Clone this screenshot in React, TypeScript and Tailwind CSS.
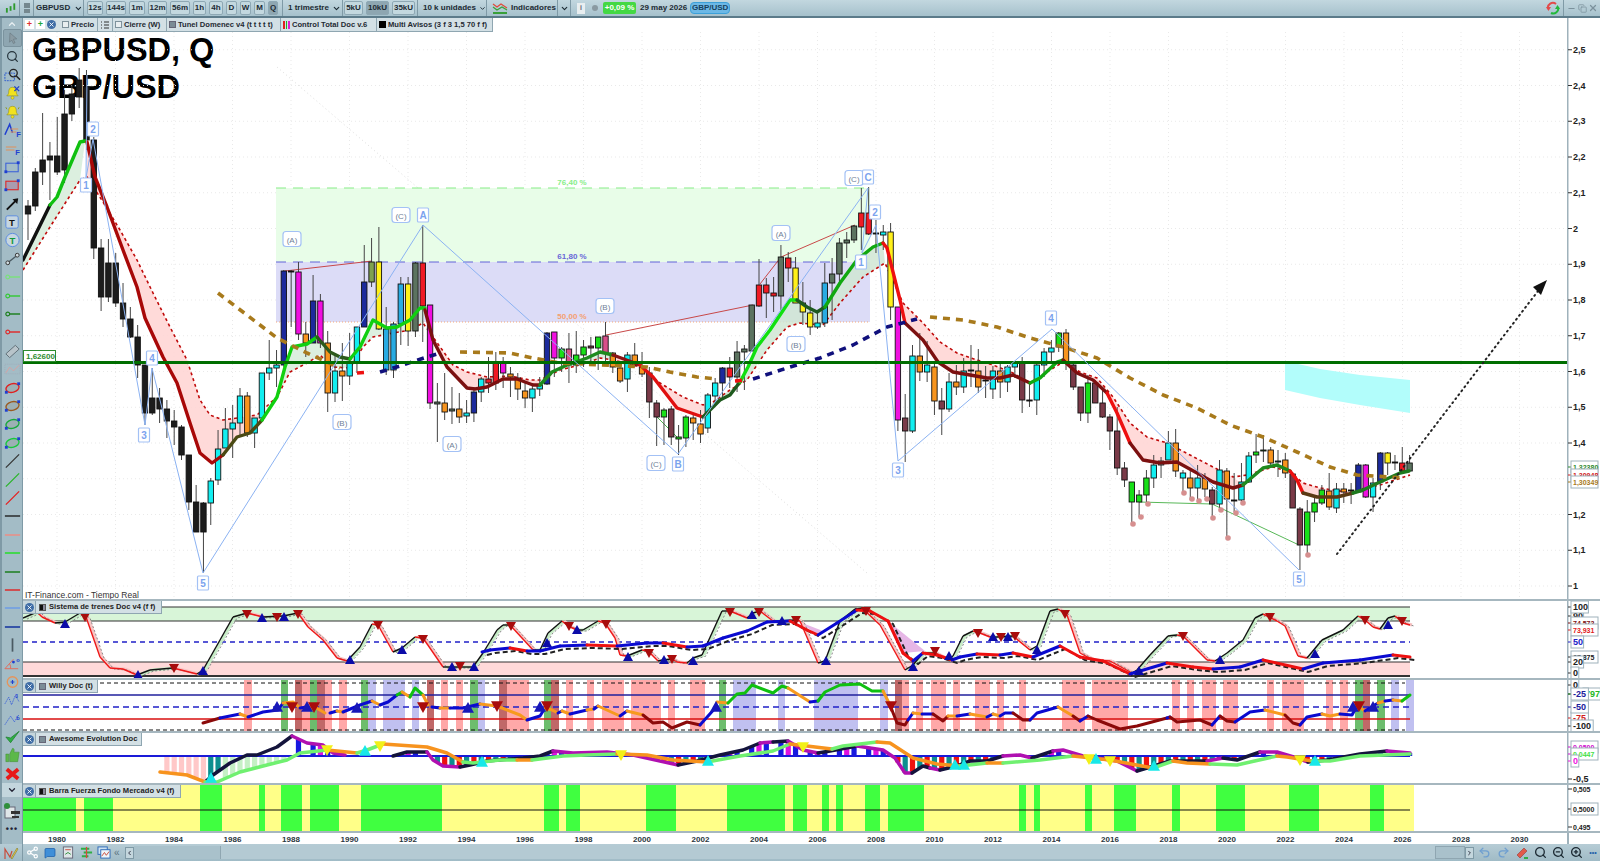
import type { ReactNode } from "react";
import { ChevronDown, ChevronUp, ChevronLeft, ChevronRight, Undo2, Redo2, ZoomIn, ZoomOut, Search, Share2, MessageSquare, X, Minus, Copy } from "lucide-react";

type Pt = [number, number];
type Seg = { c: string; p: Pt[] };

const COLORS: Record<string, string> = {
  k: "#1c1c1c", c: "#12eef0", o: "#f7941e", n: "#1c2a9c", m: "#f010e0", r: "#f01a24", y: "#fff01a",
  g: "#18e018", b: "#29abe2", s: "#7fa050", v: "#5c7360", w: "#7a3a48", p: "#d94f8a",
};

// top wick, body top, body bottom, bottom wick, colour -- one row per quarter, in screen pixels
const CANDLES: [number, number, number, number, string][] = [
  [200, 206, 214, 240, "k"], [168, 172, 206, 211, "k"], [113, 160, 172, 185, "k"], [142, 156, 160, 200, "k"], [117, 156, 172, 175, "k"],
  [90, 114, 170, 183, "k"], [85, 94, 114, 121, "k"], [68, 80, 97, 108, "k"], [70, 87, 140, 150, "k"], [137, 140, 248, 259, "k"],
  [239, 248, 297, 311, "k"], [239, 263, 297, 302, "k"], [253, 263, 303, 307, "k"], [283, 303, 319, 327, "k"], [307, 319, 337, 338, "k"],
  [325, 337, 365, 378, "k"], [365, 365, 413, 425, "k"], [368, 398, 413, 415, "k"], [388, 398, 409, 423, "k"], [400, 409, 421, 438, "k"],
  [410, 421, 427, 445, "k"], [425, 427, 455, 460, "k"], [455, 455, 502, 510, "k"], [485, 502, 532, 532, "k"], [502, 503, 532, 573, "k"],
  [478, 481, 503, 525, "c"], [430, 449, 480, 485, "c"], [408, 429, 448, 448, "c"], [405, 423, 429, 458, "c"], [388, 396, 423, 437, "c"],
  [392, 396, 433, 437, "o"], [418, 418, 433, 448, "c"], [373, 373, 418, 418, "c"], [340, 368, 373, 380, "c"], [350, 365, 368, 387, "c"],
  [270, 271, 365, 367, "n"], [270, 271, 272, 327, "k"], [262, 272, 334, 340, "m"], [322, 334, 343, 357, "o"], [275, 301, 343, 343, "n"],
  [294, 301, 343, 348, "m"], [331, 343, 393, 412, "o"], [353, 371, 393, 402, "c"], [343, 371, 376, 401, "o"], [333, 362, 376, 385, "c"],
  [327, 327, 362, 373, "c"], [245, 282, 327, 327, "n"], [238, 262, 282, 287, "s"], [227, 262, 329, 330, "y"], [307, 329, 370, 375, "b"],
  [322, 324, 370, 378, "b"], [277, 284, 324, 345, "b"], [277, 284, 331, 346, "y"], [262, 263, 331, 337, "v"], [225, 263, 306, 342, "r"],
  [305, 305, 403, 409, "m"], [383, 402, 404, 442, "v"], [373, 403, 412, 420, "o"], [387, 409, 411, 424, "v"], [393, 409, 417, 423, "o"],
  [400, 413, 416, 423, "c"], [387, 392, 413, 422, "n"], [377, 379, 392, 402, "c"], [357, 379, 383, 393, "r"], [352, 363, 383, 390, "r"],
  [357, 363, 373, 388, "m"], [367, 374, 377, 397, "o"], [373, 378, 389, 400, "o"], [383, 391, 398, 408, "o"], [383, 389, 398, 412, "c"],
  [377, 385, 389, 396, "c"], [332, 333, 384, 385, "n"], [332, 332, 358, 377, "m"], [347, 349, 358, 372, "g"], [333, 349, 365, 383, "p"],
  [331, 355, 365, 373, "g"], [340, 347, 355, 367, "g"], [337, 346, 348, 365, "w"], [337, 337, 348, 370, "g"], [322, 336, 353, 362, "p"],
  [352, 353, 367, 373, "o"], [365, 368, 381, 383, "o"], [352, 355, 379, 392, "c"], [343, 355, 365, 367, "o"], [352, 367, 374, 377, "o"],
  [367, 373, 402, 418, "w"], [400, 403, 417, 446, "w"], [408, 410, 417, 445, "g"], [406, 409, 437, 445, "w"], [425, 437, 439, 455, "g"],
  [415, 417, 438, 447, "g"], [413, 418, 423, 440, "o"], [410, 424, 434, 443, "o"], [393, 395, 428, 433, "c"], [378, 383, 396, 403, "c"],
  [367, 368, 383, 398, "n"], [357, 368, 377, 388, "r"], [341, 352, 377, 392, "v"], [345, 349, 352, 390, "v"], [305, 305, 351, 351, "v"],
  [259, 285, 306, 307, "r"], [278, 285, 293, 318, "r"], [277, 293, 296, 312, "r"], [245, 257, 296, 310, "v"], [252, 258, 268, 282, "r"],
  [257, 268, 303, 303, "y"], [282, 303, 312, 325, "y"], [300, 313, 327, 335, "y"], [312, 323, 327, 329, "c"], [263, 283, 323, 327, "b"],
  [258, 274, 283, 320, "v"], [238, 243, 274, 283, "v"], [232, 240, 243, 258, "v"], [225, 226, 240, 243, "v"], [188, 213, 227, 250, "r"],
  [187, 213, 234, 235, "r"], [220, 233, 234, 253, "k"], [225, 232, 235, 250, "c"], [223, 232, 307, 320, "y"], [307, 307, 420, 431, "m"],
  [394, 418, 431, 462, "w"], [345, 356, 431, 433, "c"], [333, 356, 372, 381, "o"], [341, 365, 372, 382, "c"], [363, 367, 401, 415, "o"],
  [388, 401, 409, 435, "w"], [373, 382, 409, 412, "c"], [365, 382, 387, 395, "o"], [358, 371, 387, 393, "c"], [345, 370, 371, 387, "k"],
  [349, 371, 387, 393, "o"], [366, 380, 381, 398, "k"], [366, 371, 389, 399, "c"], [363, 371, 382, 398, "o"], [365, 367, 382, 392, "c"],
  [362, 363, 367, 378, "c"], [357, 363, 400, 413, "w"], [383, 400, 401, 407, "k"], [363, 365, 400, 415, "c"], [348, 352, 365, 377, "c"],
  [340, 348, 352, 362, "c"], [332, 333, 347, 352, "g"], [329, 333, 362, 370, "o"], [364, 365, 387, 390, "w"], [387, 387, 413, 421, "w"],
  [375, 383, 413, 423, "g"], [380, 383, 403, 403, "w"], [387, 403, 417, 418, "w"], [414, 417, 431, 450, "w"], [407, 431, 468, 475, "w"],
  [462, 468, 480, 487, "w"], [482, 482, 502, 524, "g"], [490, 495, 502, 517, "g"], [470, 478, 495, 503, "g"], [455, 465, 478, 488, "c"],
  [457, 461, 465, 478, "c"], [431, 443, 460, 460, "c"], [429, 443, 471, 477, "o"], [470, 473, 478, 493, "c"], [470, 478, 488, 500, "o"],
  [465, 478, 488, 500, "c"], [473, 478, 489, 497, "o"], [487, 490, 504, 517, "w"], [460, 470, 504, 509, "c"], [468, 471, 499, 537, "o"],
  [473, 500, 501, 512, "k"], [463, 482, 500, 502, "c"], [452, 456, 482, 483, "c"], [434, 452, 455, 463, "g"], [435, 450, 451, 462, "g"],
  [447, 450, 463, 465, "o"], [450, 461, 462, 477, "c"], [453, 460, 473, 478, "o"], [472, 474, 508, 508, "w"], [507, 509, 545, 570, "w"],
  [500, 512, 545, 553, "g"], [497, 503, 512, 522, "g"], [485, 490, 503, 505, "g"], [473, 491, 507, 510, "o"], [483, 489, 508, 513, "c"],
  [483, 489, 492, 503, "o"], [483, 490, 491, 504, "k"], [463, 465, 492, 493, "n"], [464, 465, 497, 498, "m"], [478, 483, 497, 512, "c"],
  [452, 453, 482, 490, "n"], [452, 453, 463, 475, "y"], [455, 462, 463, 470, "k"], [447, 463, 471, 472, "r"], [455, 463, 471, 472, "v"],
];
const candleX = (i: number) => 28 + i * 7.31;

const FAST: Seg[] = [
  { c: "#111", p: [[23, 260], [50, 205]] },
  { c: "#10c010", p: [[50, 205], [57, 197], [65, 177], [80, 142], [85, 141]] },
  { c: "#a80808", p: [[87, 142], [95, 177], [107, 207], [123, 250], [137, 287], [145, 318], [163, 357], [177, 383], [190, 423], [200, 453], [212, 463], [223, 455]] },
  { c: "#4a4a14", p: [[223, 455], [237, 437], [250, 433], [262, 420]] },
  { c: "#10d010", p: [[262, 420], [277, 397], [285, 367], [292, 347], [307, 344], [317, 337]] },
  { c: "#2c5a1c", p: [[317, 337], [330, 352], [340, 357], [350, 359]] },
  { c: "#10d010", p: [[350, 359], [360, 347], [373, 320], [387, 328], [397, 327], [410, 320], [420, 308], [425, 308]] },
  { c: "#7c1010", p: [[425, 310], [433, 340], [447, 367], [467, 388], [475, 389], [487, 387], [503, 379], [517, 379], [533, 385], [540, 385]] },
  { c: "#1e8a1e", p: [[540, 385], [552, 372], [567, 365], [587, 358], [600, 352], [613, 355]] },
  { c: "#8a1414", p: [[613, 355], [640, 365]] },
  { c: "#e01010", p: [[640, 365], [653, 377], [677, 408], [697, 415], [703, 417]] },
  { c: "#1e5a1e", p: [[703, 417], [710, 410], [720, 400], [730, 395], [740, 382]] },
  { c: "#10e010", p: [[740, 382], [748, 367], [757, 347], [770, 330], [790, 300], [797, 300]] },
  { c: "#1e5a1e", p: [[797, 300], [807, 307], [817, 312], [825, 307]] },
  { c: "#10a810", p: [[825, 307], [840, 283], [857, 260], [873, 247], [883, 243]] },
  { c: "#ee1010", p: [[883, 243], [887, 248], [900, 300], [905, 323]] },
  { c: "#7c1010", p: [[905, 323], [923, 340], [938, 362], [953, 372], [970, 375], [987, 378], [1000, 378], [1013, 375], [1030, 383]] },
  { c: "#10a810", p: [[1030, 383], [1040, 378], [1057, 362], [1063, 360]] },
  { c: "#7c1010", p: [[1063, 360], [1077, 373], [1093, 380], [1107, 393]] },
  { c: "#ee1010", p: [[1107, 393], [1117, 413], [1130, 443]] },
  { c: "#7c1010", p: [[1130, 443], [1143, 460], [1160, 463], [1177, 462], [1197, 473], [1213, 482], [1233, 488], [1243, 485]] },
  { c: "#1e8a1e", p: [[1243, 485], [1263, 468], [1277, 465], [1290, 471]] },
  { c: "#ee1010", p: [[1290, 471], [1297, 480], [1303, 493]] },
  { c: "#5a3a14", p: [[1303, 493], [1317, 497], [1337, 497], [1353, 493]] },
  { c: "#1e7a1e", p: [[1353, 493], [1363, 490], [1380, 482], [1400, 473], [1409, 471]] },
];
const SLOW: Pt[] = [
  [23, 270], [50, 227], [80, 180], [87, 177], [103, 202], [120, 230], [137, 260], [153, 293], [170, 327], [187, 360], [200, 400], [210, 415], [223, 420], [237, 418], [257, 415], [277, 397], [290, 372], [307, 363], [320, 355], [332, 367], [350, 368], [363, 347], [373, 337], [393, 333], [410, 330], [423, 323],
  [433, 337], [453, 365], [467, 372], [487, 377], [510, 376], [530, 380], [540, 380], [560, 370], [580, 365], [600, 358], [613, 360], [640, 367], [660, 383], [683, 397], [703, 405], [713, 402], [730, 390], [747, 380], [767, 350], [787, 327], [800, 323], [823, 325], [840, 303], [863, 277], [885, 263],
  [903, 303], [923, 323], [940, 342], [957, 353], [977, 360], [993, 365], [1013, 373], [1030, 383], [1047, 372], [1063, 362], [1080, 372], [1097, 378], [1113, 397], [1130, 423], [1147, 437], [1167, 443], [1190, 455], [1213, 467], [1233, 477], [1247, 475], [1273, 467], [1290, 472], [1303, 483], [1320, 488], [1347, 492], [1380, 485], [1410, 475],
];
const BANDS: [number, number, string][] = [
  [23, 85, "#d6ecd9"], [87, 262, "#ffd4d2"], [263, 425, "#d6ecd9"], [425, 540, "#ffd4d2"], [540, 613, "#d6ecd9"], [613, 710, "#ffd4d2"],
  [710, 885, "#d0e6d4"], [887, 1030, "#ffd4d2"], [1063, 1243, "#ffd4d2"], [1290, 1360, "#ffd4d2"],
];
const TREND: Seg[] = [
  { c: "#a87a1c", p: [[218, 293], [277, 338], [307, 353], [340, 368]] },
  { c: "#ee1010", p: [[357, 373], [370, 372]] },
  { c: "#10107c", p: [[380, 372], [403, 365], [427, 357], [440, 353]] },
  { c: "#a87a1c", p: [[460, 352], [510, 353], [533, 358], [560, 363], [647, 367], [670, 372], [697, 377], [717, 379]] },
  { c: "#ee1010", p: [[735, 381], [747, 380]] },
  { c: "#10107c", p: [[753, 379], [787, 368], [820, 358], [853, 345], [887, 327], [917, 319]] },
  { c: "#a87a1c", p: [[930, 317], [963, 320], [997, 327], [1030, 338], [1063, 347], [1097, 358], [1130, 378], [1163, 395], [1197, 408], [1230, 425], [1263, 437], [1297, 452], [1330, 467], [1357, 475], [1405, 478]] },
];
const WAVE: Pt[] = [[87, 75], [86, 178], [93, 139], [145, 425], [152, 368], [203, 573], [423, 225], [678, 454], [868, 188], [862, 253], [876, 225], [898, 461], [1052, 329], [1299, 570]];
const DOTS: Pt[] = [[1133, 524], [1141, 517], [1148, 504], [1184, 493], [1192, 499], [1199, 501], [1207, 499], [1213, 518], [1221, 510], [1228, 538], [1236, 513], [1243, 503], [1308, 555]];
const WAVE_TAGS: [string, number, number][] = [
  ["2", 93, 129], ["1", 86, 185], ["3", 144, 435], ["4", 152, 358], ["5", 203, 583], ["A", 423, 215], ["(A)", 292, 239], ["(C)", 401, 215], ["(B)", 342, 422],
  ["(A)", 452, 444], ["(B)", 605, 306], ["(C)", 656, 463], ["B", 678, 464], ["(A)", 781, 233], ["(B)", 796, 344], ["(C)", 854, 178], ["C", 868, 177],
  ["1", 861, 262], ["2", 875, 212], ["3", 898, 470], ["4", 1051, 318], ["5", 1299, 579],
];

const OSC_K: Pt[] = [
  [23, 618], [37, 612], [42, 617], [55, 623], [65, 622], [80, 613], [86, 617], [100, 657], [110, 668], [123, 669], [137, 675], [150, 670], [173, 668], [197, 674], [203, 670], [220, 640], [233, 617], [247, 613], [263, 617], [283, 616], [298, 613], [308, 627], [323, 640], [337, 658], [347, 661], [360, 647], [372, 624], [378, 625], [393, 652], [402, 648], [415, 637], [423, 638], [443, 667], [473, 667], [483, 653], [497, 630], [503, 625], [510, 625], [533, 650], [540, 650], [548, 633], [562, 621], [568, 626], [577, 630], [583, 630], [598, 621], [605, 623], [615, 638], [620, 655], [627, 656], [642, 650], [648, 651], [658, 661], [663, 660], [672, 659], [677, 662], [687, 663], [693, 658], [702, 655], [722, 611], [730, 611], [747, 618], [753, 613], [760, 611], [773, 621], [780, 621], [795, 620], [800, 621], [818, 663], [825, 661], [840, 621], [855, 609], [862, 608], [880, 625], [905, 670], [913, 665], [923, 653], [935, 653], [947, 660], [953, 656], [963, 636], [973, 631], [980, 633], [990, 637], [997, 637], [1013, 636], [1030, 650], [1037, 646], [1050, 611], [1058, 609], [1067, 615], [1080, 653], [1093, 660], [1110, 661], [1132, 673], [1137, 670], [1150, 655], [1168, 636], [1177, 635], [1183, 636], [1207, 660], [1215, 661], [1227, 653], [1243, 640], [1255, 618], [1263, 614], [1277, 621], [1285, 626], [1298, 656], [1307, 658], [1322, 640], [1343, 630], [1358, 616], [1365, 620], [1373, 627], [1380, 629], [1388, 618], [1395, 616], [1403, 623], [1410, 625],
];
const OSC_MA: Pt[] = [
  [482, 652], [490, 650], [510, 648], [527, 651], [540, 651], [560, 646], [587, 645], [617, 646], [647, 643], [663, 643], [687, 647], [703, 646], [723, 638], [747, 631], [767, 622], [790, 621], [807, 630], [818, 635], [837, 623], [857, 610], [870, 611], [888, 621], [903, 653], [913, 661], [923, 653], [937, 655], [952, 660], [960, 657], [977, 654], [1000, 655], [1013, 653], [1033, 657], [1060, 646], [1080, 657], [1103, 661], [1130, 674], [1167, 663], [1193, 667], [1213, 669], [1240, 667], [1263, 660], [1303, 669], [1323, 663], [1360, 660], [1393, 655], [1410, 657],
];
const OSC_UP: Pt[] = [[65, 624], [138, 675], [203, 671], [262, 618], [284, 617], [350, 660], [402, 650], [452, 667], [474, 667], [547, 643], [577, 630], [628, 657], [664, 660], [693, 661], [752, 615], [782, 621], [826, 661], [913, 667], [949, 656], [993, 637], [1008, 637], [1037, 650], [1139, 671], [1220, 660], [1315, 654], [1388, 625]];
const OSC_DOWN: Pt[] = [[85, 617], [174, 668], [247, 614], [277, 617], [298, 614], [378, 625], [423, 639], [460, 666], [511, 626], [569, 626], [606, 624], [649, 653], [672, 659], [730, 612], [759, 612], [796, 620], [866, 611], [935, 651], [978, 633], [1001, 637], [1015, 636], [1065, 614], [1183, 636], [1270, 617], [1365, 620], [1402, 621]];

const W = { red: "#8b0a0a", blue: "#0a0ad0", or: "#f79a1e", gr: "#10c010" };
const WILLY: Seg[] = [
  { c: W.red, p: [[203, 723], [220, 718]] }, { c: W.blue, p: [[220, 718], [240, 714]] }, { c: W.or, p: [[240, 714], [248, 717]] },
  { c: W.blue, p: [[248, 717], [263, 712], [278, 710], [283, 703]] }, { c: W.or, p: [[283, 703], [293, 702], [300, 708]] }, { c: W.blue, p: [[300, 708], [307, 707]] },
  { c: W.or, p: [[307, 707], [315, 707], [325, 713]] }, { c: W.blue, p: [[330, 713], [337, 711]] }, { c: W.or, p: [[337, 711], [343, 712]] },
  { c: W.blue, p: [[343, 712], [360, 705], [372, 701]] }, { c: W.or, p: [[372, 701], [380, 705]] }, { c: W.blue, p: [[380, 705], [388, 702], [397, 695]] },
  { c: W.gr, p: [[397, 695], [402, 692]] }, { c: W.or, p: [[402, 692], [410, 697]] }, { c: W.gr, p: [[410, 697], [415, 688], [423, 695]] },
  { c: W.or, p: [[423, 695], [428, 705]] }, { c: W.blue, p: [[432, 707], [440, 708]] }, { c: W.or, p: [[440, 708], [450, 708]] }, { c: W.blue, p: [[450, 708], [463, 708], [480, 704]] },
  { c: W.or, p: [[480, 704], [497, 706], [520, 715], [527, 720]] }, { c: W.blue, p: [[527, 720], [540, 716], [545, 708]] }, { c: W.or, p: [[545, 708], [552, 710], [558, 713]] },
  { c: W.blue, p: [[558, 713], [562, 711]] }, { c: W.or, p: [[562, 711], [570, 714]] }, { c: W.blue, p: [[570, 714], [587, 710]] }, { c: W.or, p: [[587, 710], [594, 709]] },
  { c: W.blue, p: [[594, 709], [598, 706]] }, { c: W.or, p: [[598, 706], [620, 716]] }, { c: W.blue, p: [[620, 716], [627, 711]] }, { c: W.or, p: [[627, 711], [643, 715]] },
  { c: W.red, p: [[643, 715], [653, 723], [663, 722], [672, 728], [687, 722], [700, 725]] }, { c: W.blue, p: [[700, 725], [717, 706]] }, { c: W.or, p: [[717, 702], [728, 703]] },
  { c: W.gr, p: [[728, 703], [737, 694], [745, 693], [752, 685], [773, 693], [782, 686], [788, 688]] }, { c: W.or, p: [[788, 688], [810, 702]] }, { c: W.blue, p: [[810, 702], [818, 701]] },
  { c: W.gr, p: [[818, 701], [825, 692], [840, 685], [860, 684], [872, 691], [883, 691]] }, { c: W.or, p: [[883, 691], [890, 705]] },
  { c: W.red, p: [[890, 705], [897, 723], [905, 725], [908, 720]] }, { c: W.blue, p: [[908, 720], [913, 713]] }, { c: W.or, p: [[913, 713], [922, 714]] }, { c: W.blue, p: [[922, 714], [933, 714]] },
  { c: W.red, p: [[933, 714], [943, 721], [948, 716]] }, { c: W.or, p: [[948, 716], [957, 716]] }, { c: W.blue, p: [[957, 716], [970, 714]] }, { c: W.or, p: [[970, 714], [987, 717]] },
  { c: W.blue, p: [[987, 717], [993, 714]] }, { c: W.or, p: [[993, 714], [1000, 716]] }, { c: W.blue, p: [[1000, 716], [1005, 713], [1013, 713]] }, { c: W.red, p: [[1013, 713], [1023, 720], [1030, 720]] },
  { c: W.blue, p: [[1030, 720], [1037, 713], [1058, 707]] }, { c: W.or, p: [[1058, 707], [1073, 716]] }, { c: W.red, p: [[1073, 716], [1080, 721]] }, { c: W.blue, p: [[1080, 721], [1088, 716]] },
  { c: W.red, p: [[1088, 716], [1097, 720], [1120, 729], [1137, 726], [1167, 718]] }, { c: W.blue, p: [[1167, 718], [1170, 717]] }, { c: W.red, p: [[1170, 717], [1177, 722], [1200, 720], [1212, 725]] },
  { c: W.blue, p: [[1212, 725], [1220, 716]] }, { c: W.red, p: [[1220, 716], [1227, 721], [1235, 722]] }, { c: W.blue, p: [[1235, 722], [1250, 712], [1265, 710]] }, { c: W.or, p: [[1265, 710], [1285, 715]] },
  { c: W.red, p: [[1285, 715], [1293, 723], [1300, 725]] }, { c: W.blue, p: [[1300, 725], [1307, 717], [1322, 714]] }, { c: W.or, p: [[1322, 714], [1330, 716], [1340, 714]] }, { c: W.blue, p: [[1340, 714], [1352, 715], [1357, 706]] },
  { c: W.or, p: [[1357, 706], [1365, 711]] }, { c: W.blue, p: [[1365, 711], [1378, 703]] }, { c: W.or, p: [[1378, 703], [1385, 701]] }, { c: W.blue, p: [[1385, 701], [1393, 700]] }, { c: W.or, p: [[1393, 700], [1402, 701]] }, { c: W.gr, p: [[1402, 701], [1410, 695]] },
];
const WILLY_UP: Pt[] = [[277, 707], [307, 707], [357, 708], [468, 708], [540, 707], [716, 707], [1353, 707], [1373, 707]];
const WILLY_DOWN: Pt[] = [[292, 707], [314, 707], [423, 707], [497, 706], [547, 706], [891, 706], [1359, 706]];
const PK = "#ffa8a8", GR = "#6dbd6d", MR = "#c06868", LV = "#c0c0f0";
const WILLY_BARS: [number, number, string][] = [
  [244, 252, PK], [281, 288, GR], [295, 302, MR], [302, 310, PK], [310, 317, GR], [317, 325, MR], [325, 332, PK], [339, 347, PK], [361, 368, GR], [368, 376, LV], [383, 405, LV], [412, 419, LV], [427, 434, MR], [441, 448, PK], [456, 463, PK], [470, 478, GR], [478, 485, LV],
  [499, 507, MR], [507, 529, PK], [544, 551, GR], [551, 559, MR], [566, 573, PK], [587, 594, PK], [602, 624, PK], [631, 661, PK], [668, 675, PK], [690, 705, PK], [719, 726, GR], [733, 756, LV], [778, 785, LV], [814, 858, LV], [880, 888, LV], [895, 902, MR], [902, 909, PK], [916, 923, PK], [931, 946, PK], [953, 960, PK],
  [975, 990, PK], [997, 1004, PK], [1019, 1026, PK], [1062, 1085, PK], [1092, 1128, PK], [1172, 1180, PK], [1187, 1194, PK], [1202, 1216, PK], [1223, 1238, PK], [1267, 1274, PK], [1282, 1304, PK], [1326, 1333, PK], [1340, 1348, PK], [1355, 1363, GR], [1363, 1370, MR], [1377, 1385, GR], [1391, 1399, LV], [1406, 1414, LV],
];

const AK = "#14143c", AM = "#b010b0";
const AWE_MAIN: Seg[] = [
  { c: AK, p: [[205, 782], [213, 775], [230, 763], [247, 755], [257, 755], [277, 747], [292, 736]] }, { c: AM, p: [[292, 736], [307, 743], [323, 745], [333, 753], [345, 755]] },
  { c: AK, p: [[393, 756], [407, 752], [427, 752]] }, { c: AM, p: [[427, 752], [433, 760], [443, 766], [460, 767]] }, { c: AK, p: [[460, 767], [470, 765], [487, 761], [523, 758], [540, 756], [553, 751]] },
  { c: AM, p: [[553, 751], [573, 753], [607, 752], [633, 755], [660, 761], [678, 765]] }, { c: AK, p: [[678, 765], [697, 761], [720, 755], [743, 750], [760, 743]] }, { c: AM, p: [[760, 743], [773, 742]] },
  { c: AK, p: [[773, 742], [788, 741]] }, { c: AM, p: [[788, 741], [803, 750], [818, 753]] }, { c: AK, p: [[818, 753], [830, 751], [857, 746]] }, { c: AM, p: [[857, 746], [883, 750], [895, 758], [905, 773], [912, 773]] },
  { c: AK, p: [[912, 773], [923, 766], [930, 768]] }, { c: AM, p: [[930, 768], [940, 770]] }, { c: AK, p: [[940, 770], [957, 766], [970, 761], [987, 761], [1003, 756]] }, { c: AM, p: [[1003, 756], [1020, 755], [1032, 758]] },
  { c: AK, p: [[1032, 758], [1053, 751]] }, { c: AM, p: [[1053, 751], [1063, 750], [1083, 756], [1117, 761], [1137, 771]] }, { c: AK, p: [[1137, 771], [1147, 768], [1170, 761], [1207, 761]] }, { c: AM, p: [[1207, 761], [1223, 758]] },
  { c: AK, p: [[1223, 758], [1237, 760], [1260, 752]] }, { c: AM, p: [[1260, 752], [1277, 752], [1297, 758], [1308, 762]] }, { c: AK, p: [[1308, 762], [1327, 760], [1360, 754], [1387, 751]] }, { c: AM, p: [[1387, 751], [1410, 753]] },
];
const AO = "#f7931e", AG = "#70f070";
const AWE_SIGNAL: Seg[] = [
  { c: AO, p: [[160, 772], [187, 775], [205, 782]] }, { c: AG, p: [[205, 782], [217, 782], [240, 772], [267, 765], [287, 760], [300, 753], [327, 750]] }, { c: AO, p: [[327, 750], [357, 753]] }, { c: AG, p: [[357, 753], [367, 750], [383, 744]] },
  { c: AO, p: [[383, 744], [427, 747], [447, 753], [463, 762]] }, { c: AG, p: [[463, 762], [473, 763], [500, 760], [517, 760]] }, { c: AO, p: [[517, 760], [532, 760]] }, { c: AG, p: [[532, 760], [563, 756], [587, 755], [617, 754]] },
  { c: AO, p: [[617, 754], [647, 755], [673, 760], [707, 762]] }, { c: AG, p: [[707, 762], [740, 756], [773, 751], [790, 744]] }, { c: AO, p: [[790, 744], [832, 749]] }, { c: AG, p: [[832, 749], [843, 746], [877, 742]] },
  { c: AO, p: [[877, 742], [890, 743], [913, 758], [937, 764], [960, 766]] }, { c: AG, p: [[960, 766], [987, 763]] }, { c: AO, p: [[987, 763], [1003, 763]] }, { c: AG, p: [[1003, 763], [1040, 760], [1073, 756]] },
  { c: AO, p: [[1073, 756], [1110, 760], [1153, 768]] }, { c: AG, p: [[1153, 768], [1173, 761]] }, { c: AO, p: [[1173, 761], [1187, 763], [1210, 764]] }, { c: AG, p: [[1210, 764], [1237, 765], [1277, 756]] },
  { c: AO, p: [[1277, 756], [1287, 757], [1312, 761]] }, { c: AG, p: [[1312, 761], [1330, 761], [1360, 756], [1410, 754]] },
];
const AWE_CYAN: Pt[] = [[211, 778], [365, 751], [482, 762], [708, 761], [955, 765], [964, 765], [1096, 759], [1154, 766], [1315, 761]];
const AWE_YELLOW: Pt[] = [[327, 750], [380, 746], [621, 755], [803, 747], [1089, 759], [1110, 761], [1300, 760]];

const FORCE_GREEN: [number, number][] = [
  [23, 76], [84, 113], [200, 222], [259, 265], [281, 302], [310, 339], [361, 442], [544, 559], [566, 580], [646, 676], [727, 785], [793, 807], [822, 829], [836, 843], [865, 880], [888, 924],
  [1019, 1026], [1034, 1040], [1085, 1092], [1114, 1136], [1172, 1180], [1216, 1245], [1289, 1319], [1370, 1384],
];

const YEARS = Array.from({ length: 26 }, (_, i) => 1980 + i * 2);
const yearX = (yr: number) => 57 + (yr - 1980) * 29.25;
const priceY = (p: number) => 586 - (p - 1) * 357.5;
const pts = (p: Pt[]) => p.map((q) => q.join(",")).join(" ");

function interp(line: Pt[], x: number) {
  for (let i = 1; i < line.length; i++) {
    const [x0, y0] = line[i - 1];
    const [x1, y1] = line[i];
    if (x >= x0 && x <= x1) return y0 + ((y1 - y0) * (x - x0)) / (x1 - x0 || 1);
  }
  return 756;
}

function Lines({ segs, w, dash, cap = "round" }: { segs: Seg[]; w: number; dash?: string; cap?: "round" | "butt" }) {
  return (
    <g fill="none" strokeWidth={w} strokeLinecap={cap} strokeLinejoin="round" strokeDasharray={dash}>
      {segs.map((s, i) => (
        <polyline key={i} points={pts(s.p)} stroke={s.c} />
      ))}
    </g>
  );
}

function Tri({ at, up, c, r = 5 }: { at: Pt; up: boolean; c: string; r?: number }) {
  const [x, y] = at;
  const p = up ? `${x - r},${y + r * 0.8} ${x + r},${y + r * 0.8} ${x},${y - r}` : `${x - r},${y - r * 0.8} ${x + r},${y - r * 0.8} ${x},${y + r}`;
  return <polygon points={p} fill={c} />;
}

function WaveTag({ t, x, y }: { t: string; x: number; y: number }) {
  const round = t.startsWith("(");
  const w = round ? 18 : 11;
  const h = round ? 15 : 14;
  return (
    <g>
      <rect x={x - w / 2} y={y - h / 2} width={w} height={h} rx={round ? 3 : 1} fill="#fff" stroke="#a3c1f5" strokeWidth={1.2} />
      <text x={x} y={y + 3.5} textAnchor="middle" fontSize={round ? 8 : 10} fontWeight={round ? 400 : 700} fill={round ? "#6f7f98" : "#7ba3ee"}>
        {t}
      </text>
    </g>
  );
}

function MainChart() {
  const fastAll = FAST.flatMap((s) => s.p);
  const gridPrices = Array.from({ length: 16 }, (_, i) => 1 + i * 0.1);
  return (
    <svg viewBox="23 18 1544 581" className="relative z-10 h-[581px] w-[1544px]">
      <g stroke="#e9e9e9" strokeDasharray="1 3">
        {gridPrices.map((p) => (
          <line key={p} x1={23} x2={1567} y1={priceY(p)} y2={priceY(p)} />
        ))}
        {YEARS.map((y) => (
          <line key={y} x1={yearX(y)} x2={yearX(y)} y1={32} y2={599} />
        ))}
      </g>
      <line x1={277} y1={67} x2={867} y2={573} stroke="#dddddd" strokeDasharray="1 3" />

      <rect x={276} y={188} width={594} height={74} fill="#e8fde8" />
      <rect x={276} y={262} width={594} height={60} fill="#dcdcf7" />
      <line x1={276} x2={870} y1={188} y2={188} stroke="#86ec86" strokeDasharray="10 7" />
      <line x1={276} x2={870} y1={262} y2={262} stroke="#6262d8" strokeDasharray="10 7" />
      <line x1={276} x2={870} y1={322} y2={322} stroke="#f5a878" strokeDasharray="1 2" />
      <text x={572} y={185} textAnchor="middle" fontSize={8} fontWeight={700} fill="#88ee88">76,40 %</text>
      <text x={572} y={259} textAnchor="middle" fontSize={8} fontWeight={700} fill="#6868d8">61,80 %</text>
      <text x={572} y={319} textAnchor="middle" fontSize={8} fontWeight={700} fill="#f5a070">50,00 %</text>

      <polygon points="1285,361 1320,369 1360,375 1410,380 1410,413 1360,405 1320,398 1285,390" fill="#b2fdfb" />

      {BANDS.map(([a, b, c]) => (
        <polygon
          key={a}
          fill={c}
          opacity={0.85}
          points={pts([...fastAll.filter((q) => q[0] >= a && q[0] <= b), ...SLOW.filter((q) => q[0] >= a && q[0] <= b).reverse()])}
        />
      ))}
      <polyline points={pts(SLOW)} fill="none" stroke="#c00a0a" strokeWidth={1.6} strokeDasharray="3 3" />

      <polyline points="285,271 372,261" fill="none" stroke="#c84848" />
      <polyline points="606,335 753,305" fill="none" stroke="#c84848" />
      <polyline points="760,284 781,257 855,225" fill="none" stroke="#c84848" />
      <polyline points="657,417 678,438" fill="none" stroke="#4caf4c" />
      <polyline points="1139,502 1212,504 1299,545" fill="none" stroke="#58b858" />

      {CANDLES.map(([top, bt, bb, bot, c], i) => {
        const x = candleX(i);
        return (
          <g key={i}>
            <line x1={x} x2={x} y1={top} y2={bot} stroke="#444" />
            <rect x={x - 2.7} y={bt} width={5.4} height={Math.max(bb - bt, 1)} fill={COLORS[c]} stroke="#111" strokeWidth={0.9} />
          </g>
        );
      })}

      <Lines segs={FAST} w={3.4} />
      <Lines segs={TREND} w={3.6} dash="7 6" cap="butt" />
      <rect x={23} y={361} width={1544} height={3} fill="#006e00" />
      <polyline points={pts(WAVE)} fill="none" stroke="#8bb2f2" />
      {DOTS.map(([x, y]) => (
        <circle key={x} cx={x} cy={y} r={2.8} fill="#d68f8f" />
      ))}
      {WAVE_TAGS.map(([t, x, y]) => (
        <WaveTag key={`${t}${x}`} t={t} x={x} y={y} />
      ))}

      <line x1={1337} y1={554} x2={1538} y2={291} stroke="#222" strokeWidth={2} strokeDasharray="1 4" strokeLinecap="round" />
      <polygon points="1547,280 1533,287 1541,295" fill="#111" />

      <rect x={23.5} y={350.5} width={32} height={11} fill="#fff" stroke="#2e8b2e" />
      <text x={26} y={359} fontSize={8} fontWeight={700} fill="#2e8b2e">1,62600</text>
      <text x={25} y={598} fontSize={8.5} fill="#333">IT-Finance.com - Tiempo Real</text>
    </svg>
  );
}

function OscPanel() {
  const colour = (a: Pt, b: Pt) => (b[1] <= a[1] ? "#111" : "#ee1818");
  const band = (a: Pt, b: Pt) => (b[1] <= a[1] ? "#c6ecc6" : "#f8c4c4");
  const maSegs = OSC_MA.slice(1).map((b, i) => ({ c: b[1] <= OSC_MA[i][1] ? "#0a0ad0" : "#ee1010", p: [OSC_MA[i], b] }));
  return (
    <svg viewBox="23 601 1544 77" className="h-[77px] w-[1544px]">
      <rect x={23} y={607} width={1387} height={14} fill="#d8f5d8" />
      <rect x={23} y={662} width={1387} height={14} fill="#ffd9d9" />
      <g stroke="#333" strokeWidth={1.2}>
        <line x1={23} x2={1410} y1={607} y2={607} />
        <line x1={23} x2={1410} y1={621} y2={621} />
        <line x1={23} x2={1410} y1={662} y2={662} />
        <line x1={23} x2={1410} y1={676} y2={676} strokeWidth={2} />
      </g>
      <line x1={23} x2={1410} y1={642} y2={642} stroke="#2020c8" strokeWidth={1.6} strokeDasharray="5 4" />
      <polygon points="797,621 818,635 823,631" fill="#e6b6e6" />
      <polygon points="888,621 925,651 903,653" fill="#e6b6e6" />
      {OSC_K.slice(1).map((b, i) => (
        <line key={i} x1={OSC_K[i][0] + 2} y1={OSC_K[i][1]} x2={b[0] + 2} y2={b[1]} stroke={band(OSC_K[i], b)} strokeWidth={3} />
      ))}
      <polyline points={pts(OSC_K.map(([x, y]) => [x + 4, y + 1] as Pt))} fill="none" stroke="#888" strokeDasharray="2 2" />
      {OSC_K.slice(1).map((b, i) => (
        <line key={i} x1={OSC_K[i][0]} y1={OSC_K[i][1]} x2={b[0]} y2={b[1]} stroke={colour(OSC_K[i], b)} strokeWidth={1.4} />
      ))}
      <polyline points={pts(OSC_MA.map(([x, y]) => [x + 5, y + 3] as Pt))} fill="none" stroke="#222" strokeWidth={2} strokeDasharray="5 3" />
      <Lines segs={maSegs} w={3} />
      {OSC_UP.map((p) => <Tri key={p[0]} at={p} up c="#0c0ca8" />)}
      {OSC_DOWN.map((p) => <Tri key={p[0]} at={p} up={false} c="#a80c0c" />)}
    </svg>
  );
}

function WillyPanel() {
  return (
    <svg viewBox="23 680 1544 51" className="h-[51px] w-[1544px]">
      {WILLY_BARS.map(([a, b, c]) => (
        <rect key={a} x={a} y={680} width={b - a} height={51} fill={c} />
      ))}
      <line x1={23} x2={1405} y1={683} y2={683} stroke="#111" strokeDasharray="4 3" />
      <line x1={23} x2={1410} y1={695} y2={695} stroke="#20209c" strokeWidth={1.5} />
      <line x1={23} x2={1410} y1={707} y2={707} stroke="#2020c8" strokeWidth={1.6} strokeDasharray="6 4" />
      <line x1={23} x2={1410} y1={719} y2={719} stroke="#d80f0f" strokeWidth={1.5} />
      <line x1={23} x2={1405} y1={730} y2={730} stroke="#111" strokeDasharray="4 3" />
      <Lines segs={WILLY} w={3} />
      {WILLY_UP.map((p) => <Tri key={p[0]} at={p} up c="#1818b8" r={6} />)}
      {WILLY_DOWN.map((p) => <Tri key={p[0]} at={p} up={false} c="#a80c0c" r={6} />)}
    </svg>
  );
}

function AwesomePanel() {
  const main = AWE_MAIN.flatMap((s) => s.p);
  const signal = AWE_SIGNAL.flatMap((s) => s.p);
  const bars = Array.from({ length: 190 }, (_, i) => candleX(i)).filter((x) => x > 164 && x < 1410);
  return (
    <svg viewBox="23 733 1544 50" className="h-[50px] w-[1544px]">
      {bars.map((x, i) => {
        let y = interp(main, x);
        let c = y < 756 ? (i % 4 === 1 ? "#e010e0" : i % 4 === 3 ? "#fff" : "#1818e0") : i % 2 ? "#0c8f8f" : "#ee1010";
        if (x < 205) {
          y = interp(signal, x);
          c = "#ffc8c8";
        } else if (x >= 205 && x < 222) c = "#0c8f8f";
        else if (x < 293) {
          y = interp(signal, x);
          c = "#c6f0c6";
        }
        return <rect key={x} x={x - 2.6} y={Math.min(y, 756)} width={5.2} height={Math.abs(y - 756)} fill={c} />;
      })}
      <line x1={23} x2={1410} y1={756} y2={756} stroke="#1a1ad8" strokeWidth={1.8} />
      <Lines segs={AWE_MAIN} w={3.5} />
      <Lines segs={AWE_SIGNAL} w={3.5} />
      {AWE_CYAN.map((p) => <Tri key={p[0]} at={p} up c="#18e8e8" r={6} />)}
      {AWE_YELLOW.map((p) => <Tri key={p[0]} at={p} up={false} c="#f2f018" r={6} />)}
    </svg>
  );
}

function ForcePanel() {
  return (
    <svg viewBox="23 785 1544 46" className="h-[46px] w-[1544px]">
      <rect x={23} y={785} width={1391} height={46} fill="#ffff88" />
      {FORCE_GREEN.map(([a, b]) => (
        <rect key={a} x={a} y={785} width={b - a} height={46} fill="#40ff40" />
      ))}
      <line x1={23} x2={1410} y1={810} y2={810} stroke="#111" strokeWidth={1.2} />
    </svg>
  );
}

type AxisTag = { y: number; t: string; c?: string; box?: boolean; x?: number; tick?: string };

function Axis({ top, h, tags }: { top: number; h: number; tags: AxisTag[] }) {
  return (
    <svg viewBox={`1567 ${top} 33 ${h}`} className="shrink-0" width={33} height={h}>
      <line x1={1567.5} x2={1567.5} y1={top} y2={top + h} stroke="#9fb2bb" strokeWidth={2} />
      {tags.map(({ y, t, c = "#222", box, x = 1572, tick = "#333" }, i) => {
        const long = t.length > 4;
        return (
          <g key={i}>
            <line x1={1568} x2={1572} y1={y} y2={y} stroke={tick} />
            {box && <rect x={x - 1} y={y - 6} width={long ? 27 : t.length * 4.8 + 3} height={12} fill="#fff" stroke="#9fb2bb" />}
            <text x={x + 1} y={y + 3} fontSize={long ? 7 : 9} fontWeight={700} fill={c}>
              {t}
            </text>
          </g>
        );
      })}
    </svg>
  );
}

function Panel({ label, swatch, chip, top, h, tags, children }: { label: string; swatch: ReactNode; chip: string; top: number; h: number; tags: AxisTag[]; children: ReactNode }) {
  return (
    <div className="relative flex bg-white border-t-2 border-[#a6b7bf]">
      <div className="absolute left-0 top-0 z-10 flex h-[13px] items-stretch">
        <div className="flex w-[13px] items-center justify-center bg-[#c6d6dc] border-r border-b border-[#8fa6b1]">
          <CloseDot />
        </div>
        <div className={`flex items-center gap-[3px] bg-[#d3e0e5] pl-[3px] border-r border-b border-[#8fa6b1] text-[7.6px] leading-none text-[#222] font-bold whitespace-nowrap ${chip}`}>
          {swatch}
          {label}
        </div>
      </div>
      {children}
      <Axis top={top} h={h} tags={tags} />
    </div>
  );
}

function CloseDot() {
  return (
    <span className="flex size-[9px] items-center justify-center rounded-full bg-[#3f6da6] text-white">
      <X size={7} strokeWidth={3} />
    </span>
  );
}

const GraySwatch = () => <span className="size-[7px] shrink-0 bg-[#7b8c96] border border-[#667]" />;
const HalfSwatch = () => (
  <span className="flex size-[7px] shrink-0 border border-[#555]">
    <span className="w-1/2 bg-[#111]" />
    <span className="w-1/2 bg-[#889]" />
  </span>
);

function TfBtn({ t, w, on }: { t: string; w: string; on?: boolean }) {
  return (
    <span className={`flex h-[14px] items-center justify-center rounded-[2px] border border-[#8ea8b4] text-[8px] font-bold text-[#1c2a33] ${w} ${on ? "bg-[#8ea6b1]" : "bg-[#c3d8df]"}`}>
      {t}
    </span>
  );
}

const CELL = "flex shrink-0 items-center border-r border-[#7f9aa6]";

function TopBar() {
  return (
    <div className="flex h-[18px] items-stretch border-b-2 border-[#5c7b8a] bg-linear-to-b from-[#c2d7df] to-[#a6c1cc] text-[8px] font-bold whitespace-nowrap text-[#1c2a33]">
      <div className={`${CELL} w-[20px] pl-[5px]`}>
        <svg viewBox="0 0 14 12" className="h-[12px] w-[13px]">
          <rect x={1} y={6} width={2} height={5} fill="#2d9a2d" />
          <rect x={5} y={4} width={2} height={5} fill="#2d9a2d" />
          <rect x={9} y={1} width={2} height={7} fill="#2d9a2d" />
        </svg>
      </div>
      <div className={`${CELL} w-[14px] justify-center`}>
        <span className="grid h-[10px] w-[6px] grid-cols-1 gap-px">
          <span className="bg-[#75888f]" />
          <span className="bg-[#75888f]" />
        </span>
      </div>
      <div className={`${CELL} w-[50px] pl-[2px]`}>
        GBPUSD
        <ChevronDown size={9} strokeWidth={3} className="ml-[4px]" />
      </div>
      <div className={`${CELL} w-[199px] gap-[3px] pl-[3px]`}>
        <TfBtn t="12s" w="w-[16px]" />
        <TfBtn t="144s" w="w-[20px]" />
        <TfBtn t="1m" w="w-[16px]" />
        <TfBtn t="12m" w="w-[19px]" />
        <TfBtn t="56m" w="w-[20px]" />
        <TfBtn t="1h" w="w-[13px]" />
        <TfBtn t="4h" w="w-[14px]" />
        <TfBtn t="D" w="w-[11px]" />
        <TfBtn t="W" w="w-[11px]" />
        <TfBtn t="M" w="w-[11px]" />
        <TfBtn t="Q" w="w-[10px]" on />
      </div>
      <div className={`${CELL} w-[60px] pl-[5px]`}>
        1 trimestre
        <ChevronDown size={9} strokeWidth={3} className="ml-[3px]" />
      </div>
      <div className={`${CELL} w-[75px] gap-[3px] pl-[1px]`}>
        <TfBtn t="5kU" w="w-[19px]" />
        <TfBtn t="10kU" w="w-[23px]" on />
        <TfBtn t="35kU" w="w-[23px]" />
      </div>
      <div className={`${CELL} w-[69px] pl-[5px]`}>
        10 k unidades
        <ChevronDown size={9} strokeWidth={3} className="ml-[3px]" />
      </div>
      <div className={`${CELL} w-[71px] pl-[5px]`}>
        <svg viewBox="0 0 16 14" className="h-[14px] w-[16px]">
          <polyline points="1,3 5,6 9,3 15,7" fill="none" stroke="#e04a3a" strokeWidth={1.2} />
          <polyline points="1,6 5,9 10,6 15,9" fill="none" stroke="#3aa03a" strokeWidth={1.2} />
          <rect x={1} y={11} width={14} height={2} fill="#3aa03a" />
        </svg>
        <span className="ml-[3px]">Indicadores</span>
      </div>
      <div className={`${CELL} w-[13px] justify-center`}>
        <ChevronDown size={9} strokeWidth={3} />
      </div>
      <div className="flex items-center pl-[6px]">
        <span className="flex h-[11px] w-[8px] items-center justify-center bg-[#e8eef0] text-[7px] text-[#667]">i</span>
        <span className="ml-[7px] size-[6px] rounded-full bg-[#8a9aa2]" />
        <span className="ml-[5px] flex h-[12px] w-[33px] items-center justify-center rounded-[2px] bg-[#44d844] text-white">+0,09 %</span>
        <span className="ml-[4px]">29 may 2026</span>
        <span className="ml-[3px] flex h-[12px] w-[40px] items-center justify-center rounded-[4px] border border-[#3ca0d8] bg-[#6cb8e6] text-[#17405c]">GBP/USD</span>
      </div>
      <div className="ml-auto flex items-center">
        <svg viewBox="0 0 14 14" className="h-[14px] w-[14px]">
          <path d="M2 8a5 5 0 0 1 8-5" fill="none" stroke="#e24a4a" strokeWidth={2} />
          <path d="M0 6h5l-2.5 4z" fill="#e24a4a" />
          <path d="M12 6a5 5 0 0 1-7 6" fill="none" stroke="#22b83a" strokeWidth={2} />
          <path d="M9 8h5l-2.5-4z" fill="#22b83a" />
        </svg>
        <span className="ml-[3px] h-full w-px bg-[#7f9aa6]" />
        <div className="ml-[3px] flex w-[33px] items-center justify-between pr-[2px] text-[#7b919c]">
          <Minus size={9} strokeWidth={3} />
          <Copy size={9} strokeWidth={2} />
          <X size={10} strokeWidth={3} />
        </div>
      </div>
    </div>
  );
}

function Legend() {
  const chip = "flex h-[14px] items-center gap-[2px] border-r border-b border-[#8fa6b1] bg-[#d3e0e5] pl-[2px] text-[7.6px] font-bold text-[#1f2a33] whitespace-nowrap";
  const box = "size-[7px] shrink-0 border border-[#7e929c] bg-[#e8eef0]";
  return (
    <div className="absolute left-0 top-0 z-20 flex items-start">
      <div className="flex h-[14px] w-[37px] items-center gap-[2px] bg-[#d3e0e5] pl-[2px] border-b border-[#8fa6b1]">
        <span className="flex size-[9px] items-center justify-center bg-white text-[9px] leading-none font-bold text-[#e03030]">+</span>
        <span className="flex size-[9px] items-center justify-center bg-white text-[9px] leading-none font-bold text-[#22a838]">+</span>
        <CloseDot />
      </div>
      <div className={`${chip} w-[38px]`}><span className={box} />Precio</div>
      <div className={`${chip} w-[15px] pl-[3px]`}>
        <svg viewBox="0 0 8 8" className="size-[8px]">
          <path d="M0 1h1M3 1h5M0 4h1M3 4h5M0 7h1M3 7h5" stroke="#333" strokeWidth={1.2} />
        </svg>
      </div>
      <div className={`${chip} w-[54px]`}><span className={box} />Cierre (W)</div>
      <div className={`${chip} w-[114px]`}><span className="size-[7px] shrink-0 bg-[#7b8c96] border border-[#667]" />Tunel Domenec v4 (t t t t t)</div>
      <div className={`${chip} w-[96px]`}>
        <span className="flex h-[8px] w-[7px] shrink-0 gap-px">
          <span className="w-[1.5px] bg-[#e02020]" />
          <span className="w-[1.5px] bg-[#20b020]" />
          <span className="w-[1.5px] bg-[#e020d0]" />
        </span>
        Control Total Doc v.6
      </div>
      <div className={`${chip} w-[116px]`}><span className="size-[7px] shrink-0 bg-black" />Multi Avisos (3 f 3 1,5 70 f f)</div>
    </div>
  );
}

function HLine({ c, dot }: { c: string; dot?: boolean }) {
  return (
    <svg viewBox="0 0 20 12" className="h-[12px] w-[20px]">
      {dot && <circle cx={5} cy={6} r={2} fill="none" stroke={c} strokeWidth={1.2} />}
      <line x1={dot ? 7 : 2} x2={18} y1={6} y2={6} stroke={c} strokeWidth={1.5} />
    </svg>
  );
}
function Slant({ c }: { c: string }) {
  return (
    <svg viewBox="0 0 20 16" className="h-[16px] w-[20px]">
      <line x1={3} y1={15} x2={17} y2={1} stroke={c} strokeWidth={1.3} />
    </svg>
  );
}
function Oval({ c }: { c: string }) {
  return (
    <svg viewBox="0 0 20 16" className="h-[16px] w-[20px]">
      <ellipse cx={10} cy={8} rx={7} ry={4.5} fill="#9db0b4" stroke={c} strokeWidth={1.4} transform="rotate(-15 10 8)" />
      <rect x={2} y={11} width={3} height={3} fill="#1f3fd0" />
      <rect x={15} y={2} width={3} height={3} fill="#1f3fd0" />
    </svg>
  );
}
function Bell({ x }: { x?: boolean }) {
  return (
    <svg viewBox="0 0 20 16" className="h-[16px] w-[20px]">
      <path d="M10 2c3 0 4 2 4 5 0 2 1 3 2 4H4c1-1 2-2 2-4 0-3 1-5 4-5z" fill="#f2e21e" stroke="#8a8a20" strokeWidth={0.6} />
      <circle cx={10} cy={13} r={1.6} fill="#f2e21e" stroke="#8a8a20" strokeWidth={0.5} />
      {x ? <path d="M12 1l5 5M17 1l-5 5" stroke="#2340c8" strokeWidth={1.4} /> : <path d="M3 3l1 2M17 3l-1 2" stroke="#8a9a20" strokeWidth={1} />}
    </svg>
  );
}
function Corners({ c, fill }: { c: string; fill?: string }) {
  return (
    <svg viewBox="0 0 20 16" className="h-[16px] w-[20px]">
      <rect x={3} y={4} width={13} height={9} fill={fill ?? "none"} stroke={c} strokeWidth={1.1} />
      <rect x={1.5} y={11.5} width={3} height={3} fill="#1f3fd0" />
      <rect x={14.5} y={2} width={3} height={3} fill="#1f3fd0" />
    </svg>
  );
}

const TOOLS: ReactNode[] = [
  <svg viewBox="0 0 20 16" className="h-[16px] w-[20px]"><path d="M7 2l8 7-4 .5 2 4-2 1-2-4-2.5 2.5z" fill="#8b9ba3" stroke="#5f6f77" strokeWidth={0.6} /></svg>,
  <Search size={13} strokeWidth={2.2} className="text-[#26343c]" />,
  <svg viewBox="0 0 20 16" className="h-[16px] w-[20px]"><rect x={2} y={6} width={10} height={8} fill="none" stroke="#2a58d0" strokeDasharray="2 1" /><circle cx={11} cy={6} r={4} fill="none" stroke="#222" strokeWidth={1.4} /><line x1={14} y1={9} x2={18} y2={13} stroke="#222" strokeWidth={1.6} /></svg>,
  <Bell x />,
  <Bell />,
  <svg viewBox="0 0 20 16" className="h-[16px] w-[20px]"><path d="M2 13L7 2l3 9" fill="none" stroke="#1f3fd0" strokeWidth={1.6} /><path d="M8 7h8M8 10h6" stroke="#e0905a" strokeWidth={1.1} /><text x={14} y={15} fontSize={8} fontWeight={700} fill="#1f3fd0">F</text></svg>,
  <svg viewBox="0 0 20 16" className="h-[16px] w-[20px]"><path d="M3 6h11M3 9h9" stroke="#e0905a" strokeWidth={1.1} /><text x={13} y={14} fontSize={8} fontWeight={700} fill="#1f3fd0">F</text></svg>,
  <Corners c="#3a5fd8" />,
  <Corners c="#e02020" fill="#a99cb0" />,
  <svg viewBox="0 0 20 16" className="h-[16px] w-[20px]"><path d="M4 14L14 4" stroke="#111" strokeWidth={2} /><path d="M16 2l-1 6-5-5z" fill="#111" /></svg>,
  <svg viewBox="0 0 20 16" className="h-[16px] w-[20px]"><rect x={3} y={1.5} width={13} height={13} rx={2} fill="#c6d6e0" stroke="#5a8ae0" /><text x={9.5} y={12} textAnchor="middle" fontSize={10} fontWeight={700} fill="#111">T</text></svg>,
  <svg viewBox="0 0 20 16" className="h-[16px] w-[20px]"><circle cx={10} cy={8} r={7} fill="#c6d6e0" stroke="#5a8ae0" /><text x={10} y={12} textAnchor="middle" fontSize={10} fontWeight={700} fill="#129a3a">T</text></svg>,
  <svg viewBox="0 0 20 16" className="h-[16px] w-[20px]"><line x1={5} y1={12} x2={15} y2={4} stroke="#4a5a62" strokeWidth={1.5} /><circle cx={5} cy={12} r={2} fill="#d0dce0" stroke="#333" /><circle cx={15} cy={4} r={2} fill="#d0dce0" stroke="#333" /></svg>,
  <HLine c="#7ae27a" dot />,
  <HLine c="#32c832" dot />,
  <HLine c="#1a7e1a" dot />,
  <HLine c="#e02828" dot />,
  <svg viewBox="0 0 20 16" className="h-[16px] w-[20px]"><path d="M3 11l10-9 4 4-10 9z" fill="#b8c4ca" stroke="#5f6f77" /></svg>,
  <svg viewBox="0 0 20 16" className="h-[16px] w-[20px]"><rect x={2} y={3} width={16} height={10} fill="none" stroke="#a0aebc" strokeDasharray="1 1" /><polyline points="3,12 7,6 11,10 17,4" fill="none" stroke="#d8a0a0" /></svg>,
  <Oval c="#e02020" />,
  <Oval c="#9a5a20" />,
  <Oval c="#18a83a" />,
  <Oval c="#18c83a" />,
  <Slant c="#333" />,
  <Slant c="#28b428" />,
  <Slant c="#e81c1c" />,
  <HLine c="#222" />,
  <HLine c="#f08a80" />,
  <HLine c="#1ee01e" />,
  <HLine c="#157a15" />,
  <HLine c="#e02222" />,
  <HLine c="#6a9ae8" />,
  <HLine c="#0a2a9c" />,
  <svg viewBox="0 0 20 16" className="h-[16px] w-[20px]"><line x1={10} y1={1} x2={10} y2={15} stroke="#4a5a62" strokeWidth={1.8} /></svg>,
  <svg viewBox="0 0 20 16" className="h-[16px] w-[20px]"><path d="M2 14h14M2 14L11 4M8 14a7 7 0 0 0-1-5" fill="none" stroke="#e26a5a" /><circle cx={11} cy={7} r={1.5} fill="#1f3fd0" /><text x={14} y={7} fontSize={6} fontWeight={700} fill="#1f3fd0">o</text></svg>,
  <svg viewBox="0 0 20 16" className="h-[16px] w-[20px]"><circle cx={10} cy={8} r={5.5} fill="none" stroke="#e6945a" strokeWidth={1.4} /><path d="M10 6v4M8 8h4" stroke="#1f3fd0" strokeWidth={1.2} /></svg>,
  <svg viewBox="0 0 20 16" className="h-[16px] w-[20px]"><polyline points="2,12 6,5 9,13 13,3 17,10" fill="none" stroke="#3a5fd8" strokeDasharray="1.5 1" /><text x={13} y={6} fontSize={5} fontWeight={700} fill="#1f3fd0">3</text></svg>,
  <svg viewBox="0 0 20 16" className="h-[16px] w-[20px]"><polyline points="2,14 8,5 12,11 17,3" fill="none" stroke="#3a5fd8" strokeDasharray="1.5 1" /><text x={14} y={9} fontSize={6} fontWeight={700} fill="#1f3fd0">b</text></svg>,
  <svg viewBox="0 0 20 16" className="h-[16px] w-[20px]"><path d="M3 8l5 6 9-12-9 7z" fill="#2fae44" stroke="#208030" strokeWidth={0.8} /></svg>,
  <svg viewBox="0 0 20 16" className="h-[16px] w-[20px]"><path d="M3 7h3v8H3zM7 7l3-6c2 0 2 2 1.5 4H17l-1.5 10H7z" fill="#5cb84a" stroke="#3d8a30" strokeWidth={0.5} /></svg>,
  <svg viewBox="0 0 20 16" className="h-[16px] w-[20px]"><path d="M4 3l12 10M16 3L4 13" stroke="#e81818" strokeWidth={4} /></svg>,
];

function LeftBar() {
  return (
    <div className="flex w-[23px] shrink-0 flex-col items-center bg-[#a3bcc6] border-r border-[#7f9aa6] border-l-2 border-l-[#7f9aa6]">
      <div className="flex h-[11px] items-center text-[#e6eef1]"><ChevronUp size={10} strokeWidth={3} /></div>
      {TOOLS.map((tool, i) => (
        <div key={i} className={`flex h-[18.4px] w-[19px] items-center justify-center ${i === 0 ? "rounded-[2px] bg-[#8ea6b1] border border-[#7b939e]" : ""}`}>
          {tool}
        </div>
      ))}
      <div className="flex h-[14px] w-full items-center justify-center bg-[#c3d6dd]"><ChevronDown size={10} strokeWidth={3} className="text-[#223]" /></div>
      <div className="mt-[3px] flex h-[22px] items-center">
        <svg viewBox="0 0 20 18" className="h-[18px] w-[20px]">
          <rect x={3} y={5} width={10} height={11} fill="#dfe6e8" stroke="#667" />
          <circle cx={5} cy={4} r={3} fill="#2f8f3a" />
          <rect x={9} y={9} width={9} height={3} fill="#333" />
          <rect x={10} y={14} width={7} height={2} fill="#333" />
        </svg>
      </div>
      <div className="mt-[3px] text-[9px] leading-none font-bold tracking-[1px] text-[#223]">•••</div>
    </div>
  );
}

const SLOT = "flex w-[18px] shrink-0 items-center justify-center";
const SLOT_R = "flex w-[18.4px] shrink-0 items-center justify-center";

function BottomBar() {
  return (
    <div className="flex h-[17px] items-center bg-linear-to-b from-[#b6ccd5] to-[#a0bbc6] text-[#33485a]">
      <div className="flex h-full w-[23px] shrink-0 items-center justify-center border-r border-[#7f9aa6]">
        <svg viewBox="0 0 16 14" className="h-[14px] w-[16px]">
          <path d="M2 13V3l5 8 2-6" fill="none" stroke="#c84a3a" strokeWidth={1.2} />
          <path d="M8 12l6-10 1 1-6 10z" fill="#e8c84a" stroke="#6a6a22" strokeWidth={0.5} />
        </svg>
      </div>
      <span className={SLOT}><Share2 size={13} strokeWidth={2.2} className="text-white" /></span>
      <span className={SLOT}><MessageSquare size={12} fill="#3f8fd8" strokeWidth={1.5} className="text-[#1f5fa8]" /></span>
      <span className={SLOT}><svg viewBox="0 0 12 14" className="h-[13px] w-[12px]"><rect x={1} y={1} width={10} height={12} fill="#dfe6e8" stroke="#667" /><path d="M3 4h6" stroke="#c84a3a" /><path d="M3 9l3-2 3 2" stroke="#2f8f3a" fill="none" /></svg></span>
      <span className={SLOT}><svg viewBox="0 0 14 14" className="h-[13px] w-[13px]"><path d="M1 3h9M4 7h9M2 11h7" stroke="#2fae44" strokeWidth={2} /><path d="M7 1v12" stroke="#d84a3a" strokeWidth={1.4} /></svg></span>
      <span className={SLOT}><svg viewBox="0 0 15 14" className="h-[13px] w-[14px]"><rect x={1} y={1} width={10} height={8} fill="#cfe3f2" stroke="#2a68b8" /><rect x={4} y={4} width={10} height={9} fill="#eef5f9" stroke="#2a68b8" /><polyline points="5,11 8,7 10,10 13,6" fill="none" stroke="#c84a3a" /></svg></span>
      <span className="w-[9px] text-center text-[10px] leading-none text-[#5c7280]">«</span>
      <span className="ml-[4px] flex h-[12px] w-[9px] shrink-0 items-center justify-center border border-[#7f9aa6] bg-[#c3d6dd] text-[#223]"><ChevronLeft size={8} strokeWidth={3} /></span>
      <div className="flex h-[13px] w-[1301px] shrink-0 bg-[#b4cad3]">
        <div className="h-full w-[87px] border-r border-[#8fa6b1] bg-[#a9c1cb]" />
      </div>
      <div className="h-[13px] w-[30px] shrink-0 border border-[#8fa6b1] bg-[#a9c1cb]" />
      <span className="flex h-[12px] w-[9px] shrink-0 items-center justify-center border border-[#7f9aa6] bg-[#c3d6dd] text-[#223]"><ChevronRight size={8} strokeWidth={3} /></span>
      <div className="ml-[2px] flex items-center">
        <span className={SLOT_R}><Undo2 size={13} strokeWidth={2.4} className="text-[#6f9fd0]" /></span>
        <span className={SLOT_R}><Redo2 size={13} strokeWidth={2.4} className="text-[#6f9fd0]" /></span>
        <span className={SLOT_R}><svg viewBox="0 0 14 14" className="h-[14px] w-[14px]"><path d="M2 9l7-7 3 3-7 7z" fill="#e25a4a" stroke="#8a2a2a" strokeWidth={0.5} /><path d="M9 11h4v2H9z" fill="#2fae44" /></svg></span>
        <span className={SLOT_R}><Search size={13} strokeWidth={2.4} className="text-[#1c2a33]" /></span>
        <span className={SLOT_R}><ZoomOut size={13} strokeWidth={2.4} className="text-[#1c2a33]" /></span>
        <span className={SLOT_R}><ZoomIn size={13} strokeWidth={2.4} className="text-[#1c2a33]" /></span>
        <span className="w-[14px] text-center text-[7px] leading-none font-bold text-[#1f5fa8]">•••</span>
      </div>
    </div>
  );
}

const PRICE_TAGS: AxisTag[] = [
  ...[2.5, 2.4, 2.3, 2.2, 2.1, 2, 1.9, 1.8, 1.7, 1.6, 1.5, 1.4, 1.2, 1.1, 1].map((p) => ({ y: priceY(p), t: String(p).replace(".", ",") })),
  { y: 467, t: "1,32380", c: "#2e8b2e", box: true, tick: "#2e8b2e" },
  { y: 475, t: "1,30948", c: "#d02020", box: true, tick: "#d02020" },
  { y: 482, t: "1,30349", c: "#a87a1c", box: true, tick: "#a87a1c" },
];

export default function App() {
  return (
    <div className="flex h-[861px] w-[1600px] flex-col overflow-hidden bg-white font-['Liberation_Sans',Arial,sans-serif]">
      <TopBar />
      <div className="flex h-[826px]">
        <LeftBar />
        <div className="flex w-[1577px] flex-col">
          <div className="relative flex h-[581px] bg-white">
            <Legend />
            <div className="absolute left-[9px] top-[14px] text-[32.5px] leading-[37px] font-bold text-black">
              <div>GBPUSD, Q</div>
              <div>GBP/USD</div>
            </div>
            <MainChart />
            <Axis top={18} h={581} tags={PRICE_TAGS} />
          </div>
          <Panel
            label="Sistema de trenes Doc v4 (f f)"
            swatch={<HalfSwatch />}
            chip="w-[126px]"
            top={601}
            h={77}
            tags={[
              { y: 616, t: "90", box: true }, { y: 607, t: "100", box: true },
              { y: 623, t: "74,572", box: true, c: "#7c1010", tick: "#7c1010" }, { y: 630, t: "73,931", box: true, c: "#e02020", tick: "#e02020" },
              { y: 642, t: "50", box: true, c: "#2020c8", tick: "#2020c8" }, { y: 657, t: "27,875", box: true }, { y: 662, t: "20", box: true }, { y: 673, t: "0", box: true },
            ]}
          >
            <OscPanel />
          </Panel>
          <Panel
            label="Willy Doc (t)"
            swatch={<GraySwatch />}
            chip="w-[62px]"
            top={680}
            h={51}
            tags={[
              { y: 685, t: "0", box: true }, { y: 718, t: "-75", box: true, c: "#d02020", tick: "#d02020" }, { y: 707, t: "-50", box: true, c: "#20209c", tick: "#20209c" },
              { y: 694, t: "797", box: true, c: "#22b822", x: 1584 }, { y: 694, t: "-25", box: true, c: "#20209c", tick: "#1a8a1a" }, { y: 726, t: "-100", box: true },
            ]}
          >
            <WillyPanel />
          </Panel>
          <Panel
            label="Awesome Evolution Doc"
            swatch={<GraySwatch />}
            chip="w-[106px]"
            top={733}
            h={50}
            tags={[
              { y: 747, t: "0,0500", box: true, c: "#d010d0", tick: "#d010d0" }, { y: 754, t: "0,0447", box: true, c: "#44e044", tick: "#d010d0" },
              { y: 761, t: "0", box: true, c: "#f010e0", tick: "#f010e0" }, { y: 779, t: "-0,5" },
            ]}
          >
            <AwesomePanel />
          </Panel>
          <Panel
            label="Barra Fuerza Fondo Mercado v4 (f)"
            swatch={<HalfSwatch />}
            chip="w-[145px]"
            top={785}
            h={46}
            tags={[{ y: 789, t: "0,505" }, { y: 809, t: "0,5000", box: true }, { y: 827, t: "0,495" }]}
          >
            <ForcePanel />
          </Panel>
          <div className="relative flex h-[13px] bg-white border-t-2 border-[#a6b7bf]">
            <svg viewBox="23 833 1544 11" className="h-[11px] w-[1544px]">
              {YEARS.map((y) => (
                <text key={y} x={yearX(y)} y={842} textAnchor="middle" fontSize={8} fontWeight={700} fill="#2a3640">
                  {y}
                </text>
              ))}
            </svg>
            <span className="w-[2px] bg-[#9fb2bb]" />
          </div>
        </div>
      </div>
      <BottomBar />
    </div>
  );
}
